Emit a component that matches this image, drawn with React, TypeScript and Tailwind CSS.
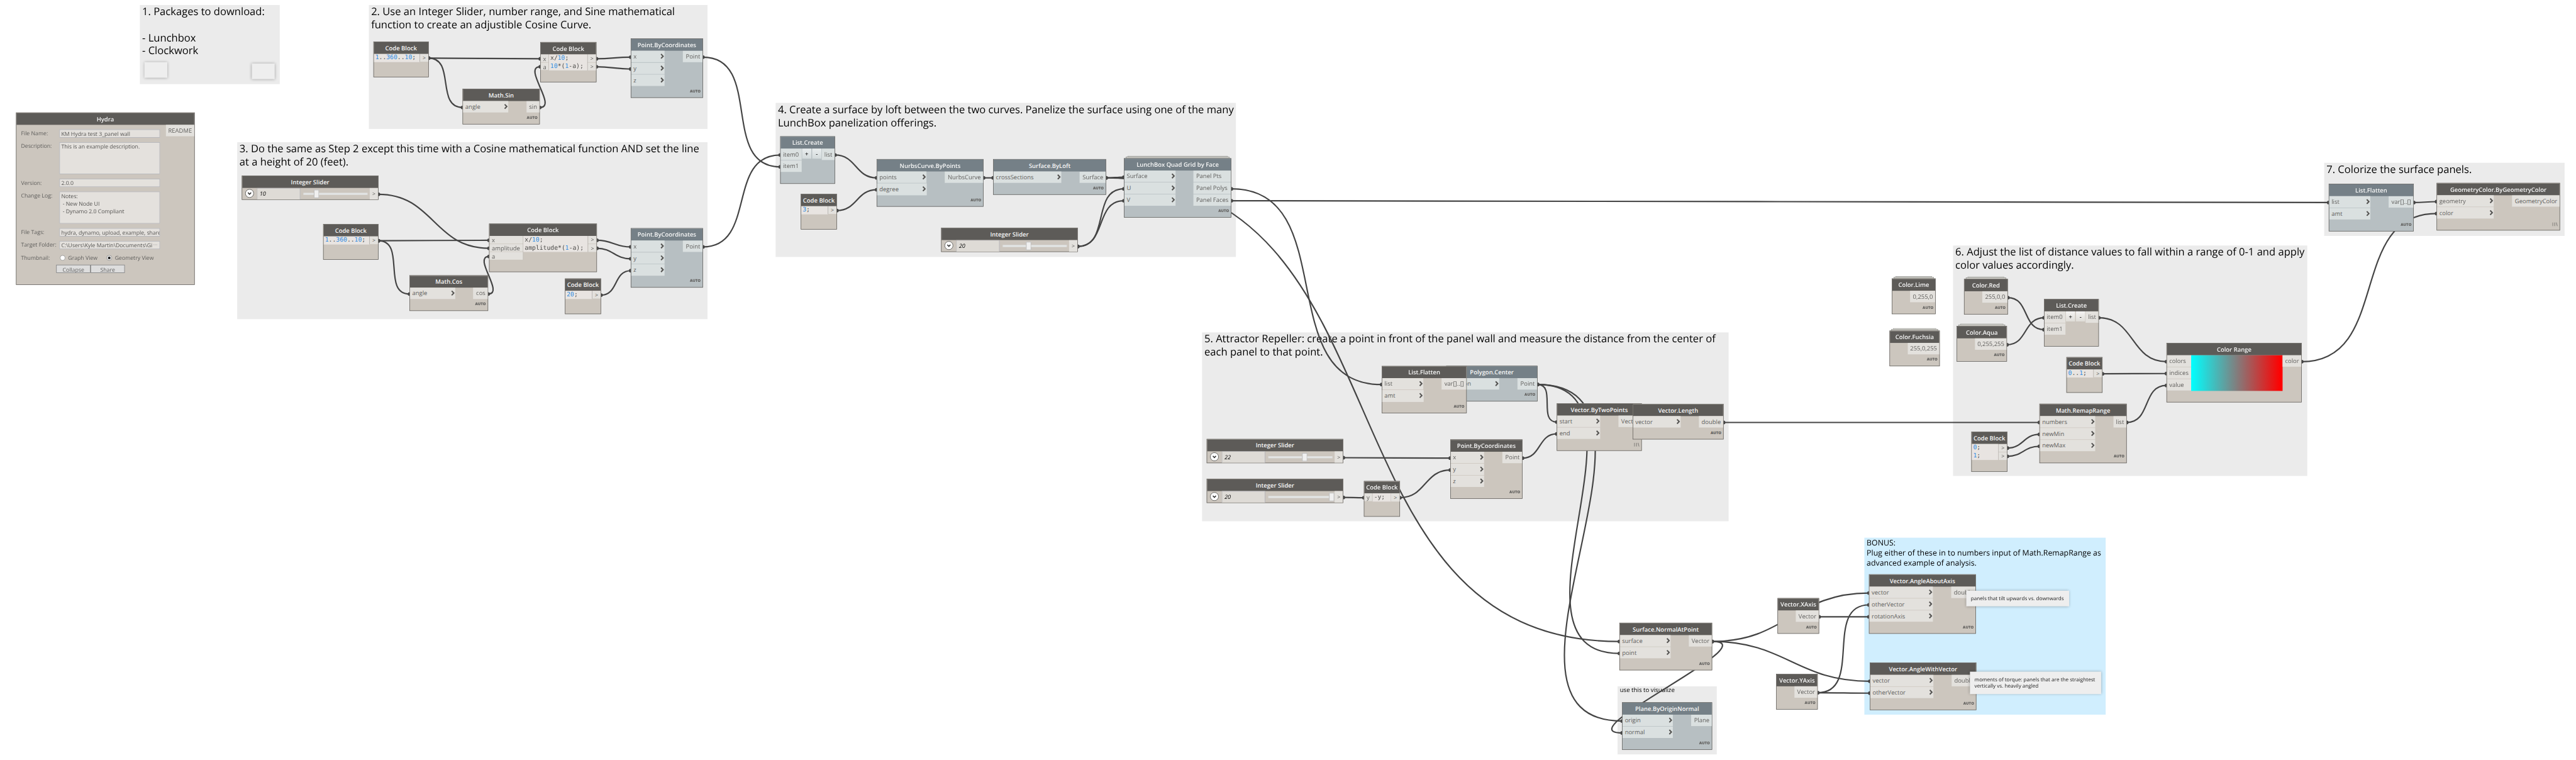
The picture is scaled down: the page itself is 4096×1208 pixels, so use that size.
import React from "react";

type Tone = "dark" | "slate";

/* ---------- shared drawing helpers ---------- */

const tones = {
  dark: { head: "bg-[#5d5b58]", body: "bg-[#ccc6be]", port: "bg-[#e3e1dd]" },
  slate: { head: "bg-[#758087]", body: "bg-[#b7bfc2]", port: "bg-[#dae0e0]" },
};

function Chevron() {
  return (
    <svg width="8" height="12" viewBox="0 0 8 12" className="mb-[2px] shrink-0">
      <path d="M1.2 1.2 L5.8 6 L1.2 10.8" fill="none" stroke="#555452" strokeWidth="2.8" />
    </svg>
  );
}

function Lacing() {
  return (
    <svg width="12" height="9" viewBox="0 0 12 9">
      <path d="M1 0.5V8.5 M5.5 0.5V8.5 M9 0.5L11 8.5" fill="none" stroke="#666462" strokeWidth="1.1" />
    </svg>
  );
}

interface ShellProps {
  x: number;
  y: number;
  w: number;
  h: number;
  title: string;
  tone?: Tone;
  stack?: boolean;
  children?: React.ReactNode;
}

function Shell({ x, y, w, h, title, tone = "dark", stack, children }: ShellProps) {
  const t = tones[tone];
  return (
    <div className="absolute" style={{ left: x, top: y, width: w, height: h }}>
      {stack && (
        <>
          <div className="absolute -top-[5px] left-2 right-2 h-[3px] border border-[#a3a3a0] bg-[#e6e6e2]" />
          <div className="absolute -top-[3px] left-1 right-1 h-1 border border-[#8a8a86] bg-[#dcdbd4]" />
        </>
      )}
      <div className={`relative flex h-full w-full flex-col overflow-hidden border border-[#5a5855] ${t.body}`}>
        <div
          className={`flex h-[26px] shrink-0 items-center justify-center whitespace-nowrap pt-px text-[13px] font-semibold text-[#f6f6f6] ${t.head}`}
        >
          {title}
        </div>
        {children}
      </div>
    </div>
  );
}

interface NodeProps extends Omit<ShellProps, "children"> {
  ins?: string[];
  inW?: number;
  outs: string[];
  outW: number;
  foot?: "auto" | "lacing" | "none";
  plain?: boolean;
  middle?: React.ReactNode;
}

function Node({ ins = [], inW = 0, outs, outW, foot = "auto", plain, middle, ...shell }: NodeProps) {
  const port = tones[shell.tone ?? "dark"].port;
  return (
    <Shell {...shell}>
      <div className="flex flex-1 items-start justify-between">
        <div className="flex flex-col gap-px" style={{ width: inW }}>
          {ins.map((name) => (
            <div key={name} className={`flex h-[25px] items-center justify-between pl-[5px] pr-px text-[13px] text-[#5f5e5c] ${port}`}>
              <span className="pt-px">{name}</span>
              {!plain && <Chevron />}
            </div>
          ))}
        </div>
        {middle}
        <div className="flex flex-col gap-px" style={{ width: outW }}>
          {outs.map((name) => (
            <div
              key={name}
              className={`flex h-[25px] items-center whitespace-nowrap pt-px text-[13px] text-[#5f5e5c] ${port} ${
                outs.length > 1 ? "justify-start pl-[6px]" : "justify-end pr-[5px]"
              }`}
            >
              {name}
            </div>
          ))}
        </div>
      </div>
      {foot !== "none" && (
        <div className="flex h-[25px] shrink-0 items-center justify-end pr-[4px] text-[8.2px] font-extrabold text-[#5f5e5c]">
          {foot === "auto" ? "AUTO" : <Lacing />}
        </div>
      )}
    </Shell>
  );
}

function CreateNode({ x, y, tone }: { x: number; y: number; tone?: Tone }) {
  const btn =
    tone === "slate"
      ? "bg-gradient-to-b from-[#e9edee] to-[#d3dadb]"
      : "bg-gradient-to-b from-[#f4f3f2] to-[#dfddd8]";
  return (
    <Node
      x={x}
      y={y}
      w={120}
      h={104}
      tone={tone}
      title="List.Create"
      ins={["item0", "item1"]}
      inW={46}
      outs={["list"]}
      outW={28}
      plain
      foot="none"
      middle={
        <div className="flex gap-[2px] text-[13px] font-semibold leading-[22px] text-[#222]">
          <div className={`h-[22px] w-[20px] text-center ${btn}`}>+</div>
          <div className={`h-[22px] w-[20px] text-center ${btn}`}>-</div>
        </div>
      }
    />
  );
}

/* Splits a line of code so that number literals can be tinted. */
function CodeLine({ text }: { text: string }) {
  return (
    <div className="h-[17.5px] whitespace-pre leading-[18px]">
      {text.split(/(\d+)/).map((part, i) => (
        <span key={i} className={i % 2 ? "text-[#2f8be2]" : "text-[#4a4947]"}>
          {part}
        </span>
      ))}
    </div>
  );
}

interface CodeProps {
  x: number;
  y: number;
  w?: number;
  h?: number;
  lines: string[];
  ins?: string[];
  inW?: number;
}

function CodeBlock({ x, y, w = 79, h = 78, lines, ins, inW = 18 }: CodeProps) {
  return (
    <Shell x={x} y={y} w={w} h={h} title="Code Block">
      <div className="flex items-start">
        {ins && (
          <div className="flex flex-col gap-px border-r border-[#b5b2ae] text-[13px] text-[#5f5e5c]" style={{ width: inW }}>
            {ins.map((n) => (
              <div key={n} className="h-[16.7px] bg-[#e3e1dd] pl-[5px] leading-[18px]">
                {n}
              </div>
            ))}
          </div>
        )}
        <div className="flex-1 overflow-hidden bg-[#e8e4e1] pl-[3px] font-['DejaVu_Sans_Mono',monospace] text-[13.4px]">
          {lines.map((l) => (
            <CodeLine key={l} text={l} />
          ))}
        </div>
        <div className="flex w-[19px] flex-col gap-px border-l border-[#aaa8a6] text-[12px] text-[#5f5e5c]">
          {lines.map((l) => (
            <div key={l} className="h-[16.8px] bg-[#e3e1dd] text-center leading-[17px]">
              &gt;
            </div>
          ))}
        </div>
      </div>
    </Shell>
  );
}

function Slider({ x, y, value, thumb }: { x: number; y: number; value: number; thumb: number }) {
  return (
    <Shell x={x} y={y} w={299} h={53} title="Integer Slider">
      <div className="flex flex-1">
        <div className="flex w-[32px] items-start justify-center pt-[2px]">
          <svg width="20" height="20" viewBox="0 0 20 20">
            <circle cx="10" cy="10" r="9" fill="#fff" stroke="#5a5855" strokeWidth="1.2" />
            <path d="M6.6 8.2L10 11.8L13.4 8.2" fill="none" stroke="#333" strokeWidth="2.2" />
          </svg>
        </div>
        <div className="w-[95px] border-l border-r border-t border-[#aaaab2] bg-[#dedbd6] pl-[5px] text-[12.5px] italic leading-[24px] text-black">
          {value}
        </div>
        <div className="flex flex-1 items-center pl-[7px]">
          <div className="flex h-[4px] w-[145px] items-center">
            <div className="h-[4px] border border-r-0 border-[#dadada] bg-[#e7eaea]" style={{ width: thumb }} />
            <div className="h-[18px] w-[11px] shrink-0 border border-[#acacac] bg-[#f0f0f0]" />
            <div
              className="h-[4px] border border-l-0 border-[#dadada] bg-[#e7eaea]"
              style={{ width: Math.max(0, 129 - thumb), visibility: thumb >= 129 ? "hidden" : "visible" }}
            />
          </div>
        </div>
        <div className="w-[18px] bg-[#e3e1dd] text-center text-[12px] leading-[26px] text-[#5f5e5c]">&gt;</div>
      </div>
    </Shell>
  );
}

interface GroupProps {
  x: number;
  y: number;
  w: number;
  h: number;
  className: string;
  lines: string[];
  children?: React.ReactNode;
}

function Group({ x, y, w, h, className, lines, children }: GroupProps) {
  return (
    <div className={`absolute whitespace-pre pl-[5px] text-black ${className}`} style={{ left: x, top: y, width: w, height: h }}>
      {lines.map((l, i) => (
        <div key={i}>{l || " "}</div>
      ))}
      {children}
    </div>
  );
}

const big = "bg-[#ebebeb] text-[22.8px] leading-[28.8px]";
const note = "bg-[#eeeeee] shadow-[0_0_6px_rgba(0,0,0,0.3)]";

/* ---------- Hydra upload form ---------- */

function Hydra() {
  const label = "text-[12px] leading-[18px] text-[#5f5e5c]";
  const box = "overflow-hidden whitespace-pre border border-[#abadb3] bg-[#e4e1dd] pl-[3px] text-[12px] text-[#555452]";
  return (
    <Shell x={35} y={246} w={391} h={377} title="Hydra">
      <div className="flex justify-between">
        <div className="grid grid-cols-[84px_220px] gap-y-[10px] whitespace-nowrap pl-[10px] pt-[10px]">
          <div className={label}>File Name:</div>
          <div className={`${box} h-[18px] leading-[17px]`}>KM Hydra test 3_panel wall</div>
          <div className={label}>Description:</div>
          <div className={`${box} h-[70px] leading-[17px]`}>This is an example description.</div>
          <div className={label}>Version:</div>
          <div className={`${box} h-[18px] leading-[17px]`}>2.0.0</div>
          <div className={label}>Change Log:</div>
          <div className={`${box} h-[70px] leading-[17px]`}>{"Notes:\n - New Node UI\n - Dynamo 2.0 Compliant"}</div>
          <div className={label}>File Tags:</div>
          <div className={`${box} h-[18px] leading-[17px] tracking-[-0.08px]`}>hydra, dynamo, upload, example, share</div>
          <div className={label}>Target Folder:</div>
          <div className={`${box} flex h-[18px] leading-[17px]`}>
            <span className="w-[201px] overflow-hidden">C:\Users\Kyle Martin\Documents\Gi</span>
            <span className="leading-[13px] text-[#a5a3a0]">···</span>
          </div>
          <div className={label}>Thumbnail:</div>
          <div className={`${label} flex items-center`}>
            <span className="ml-px mr-[6px] h-[12px] w-[12px] rounded-full border border-[#8a8a8a] bg-white" />
            Graph View
            <span className="ml-[20px] mr-[6px] flex h-[12px] w-[12px] items-center justify-center rounded-full border border-[#777] bg-white">
              <span className="h-[6px] w-[6px] rounded-full bg-[#222]" />
            </span>
            Geometry View
          </div>
        </div>
        <div className="h-[25px] w-[62px] bg-[#e3e1dd] text-center text-[13px] leading-[26px] text-[#5f5e5c]">README</div>
      </div>
      <div className="ml-[87px] mt-[6px] flex text-center text-[12px] leading-[20px] text-[#5f5e5c]">
        <div className="h-[18px] w-[75px] overflow-hidden border border-[#707070] bg-[#dddddd]">Collapse</div>
        <div className="h-[18px] w-[75px] overflow-hidden border border-[#707070] bg-[#dddddd]">Share</div>
      </div>
    </Shell>
  );
}

/* ---------- connectors: [startX, startY, endX, endY] ---------- */

const wires: [number, number, number, number][] = [
  [938, 127, 1182, 128.5],
  [938, 127, 1012, 235],
  [1181, 235, 1182, 146],
  [1305, 128.5, 1380, 125],
  [1305, 146, 1380, 151],
  [1538, 125, 1707, 365],
  [1538, 540, 1707, 339],
  [828, 425, 1070, 543],
  [828, 526.5, 1070, 525.5],
  [828, 526.5, 896, 643],
  [1068, 643, 1070, 561],
  [1306, 525.5, 1380, 540],
  [1306, 543, 1380, 566],
  [1315, 645.5, 1380, 592],
  [1827, 339, 1918, 389],
  [1831, 460.5, 1918, 415],
  [2152, 389, 2173, 389],
  [2420, 389, 2459, 387.5],
  [2420, 389, 3543, 1403],
  [2358, 539, 2459, 413],
  [2358, 539, 2459, 439],
  [2694, 413, 3023, 841],
  [2694, 439, 5095, 443],
  [3364, 841, 3406, 923],
  [3364, 841, 3543, 1429],
  [3364, 841, 3549, 1577],
  [3331, 1002, 3406, 949],
  [2939, 1001, 3173, 1002],
  [2939, 1088, 2984, 1088.5],
  [3063, 1088.5, 3173, 1028],
  [3771, 924, 4462, 924],
  [4393, 651, 4472, 721],
  [4391, 754, 4472, 695],
  [4592, 695, 4740, 791],
  [4600, 817.5, 4740, 817],
  [4653, 924, 4740, 843],
  [4392, 980, 4462, 950],
  [4392, 998, 4462, 976],
  [5036, 791, 5331, 467],
  [5281, 443, 5331, 441],
  [3746, 1403, 4089, 1297],
  [3746, 1403, 4091, 1490],
  [3746, 1403, 3549, 1603],
  [3980, 1349, 4089, 1349],
  [3977, 1515, 4089, 1323],
  [3977, 1515, 4091, 1516],
];

function Wires() {
  return (
    <svg className="absolute left-0 top-0" width="5636" height="1662" viewBox="0 0 5636 1662">
      {wires.map(([a, b, c, d], i) => {
        const off = 0.45 * Math.hypot(c - a, d - b);
        return (
          <g key={i}>
            <path d={`M${a} ${b}C${a + off} ${b} ${c - off} ${d} ${c} ${d}`} fill="none" stroke="#444444" strokeWidth="3" />
            <circle cx={a} cy={b} r="4" fill="#444444" />
            <circle cx={c} cy={d} r="4" fill="#444444" />
          </g>
        );
      })}
    </svg>
  );
}

export default function App() {
  return (
    <div className="h-[1208px] w-[4096px] overflow-hidden bg-white">
      <div className="relative h-[1662px] w-[5636px] origin-top-left scale-[0.72676] font-['Open_Sans',sans-serif] [text-rendering:geometricPrecision]">
        <Group x={306} y={11} w={306} h={173} className={big} lines={["1. Packages to download:", "", "- Lunchbox", "- Clockwork"]}>
          <div className="flex items-end justify-between pl-[5px] pr-[11px] pt-[10px]">
            <div className={`${note} mb-[3px] h-[34px] w-[50px]`} />
            <div className={`${note} h-[34px] w-[50px]`} />
          </div>
        </Group>
        <Group
          x={807}
          y={11}
          w={741}
          h={271}
          className={big}
          lines={["2. Use an Integer Slider, number range, and Sine mathematical", "function to create an adjustible Cosine Curve."]}
        />
        <Group
          x={519}
          y={311}
          w={1029}
          h={387}
          className={big}
          lines={[
            "3. Do the same as Step 2 except this time with a Cosine mathematical function AND set the line",
            "at a height of 20 (feet).",
          ]}
        />
        <Group
          x={1697}
          y={225}
          w={1007}
          h={337}
          className={big}
          lines={[
            "4. Create a surface by loft between the two curves. Panelize the surface using one of the many",
            "LunchBox panelization offerings.",
          ]}
        />
        <Group
          x={2630}
          y={727}
          w={1152}
          h={413}
          className={big}
          lines={[
            "5. Attractor Repeller: create a point in front of the panel wall and measure the distance from the center of",
            "each panel to that point.",
          ]}
        />
        <Group
          x={4273}
          y={537}
          w={775}
          h={504}
          className={big}
          lines={["6. Adjust the list of distance values to fall within a range of 0-1 and apply", "color values accordingly."]}
        />
        <Group x={5085} y={356} w={526} h={160} className={big} lines={["7. Colorize the surface panels."]} />
        <Group
          x={4079}
          y={1176}
          w={528}
          h={387}
          className="bg-[#d0eefe] text-[17px] leading-[22px]"
          lines={["BONUS:", "Plug either of these in to numbers input of Math.RemapRange as", "advanced example of analysis."]}
        />
        <Group x={3539} y={1501} w={217} h={149} className="bg-[#ebebeb] text-[13.3px] leading-[17px]" lines={["use this to visualize"]} />

        <Wires />

        <Hydra />

        <CodeBlock x={817} y={91} w={121} lines={["1..360..10;"]} />
        <CodeBlock x={1182} y={92} w={123} h={88} ins={["x", "a"]} lines={["x/10;", "10*(1-a);"]} />
        <Node x={1012} y={194} w={169} h={78} title="Math.Sin" ins={["angle"]} inW={99} outs={["sin"]} outW={28} />
        <Node x={1380} y={84} w={158} h={130} tone="slate" title="Point.ByCoordinates" ins={["x", "y", "z"]} inW={73} outs={["Point"]} outW={43} />

        <Slider x={529} y={384} value={10} thumb={23} />
        <CodeBlock x={707} y={490} w={121} lines={["1..360..10;"]} />
        <CodeBlock x={1070} y={489} w={236} h={106} ins={["x", "amplitude", "a"]} inW={74} lines={["x/10;", "amplitude*(1-a);"]} />
        <Node x={896} y={602} w={172} h={78} title="Math.Cos" ins={["angle"]} inW={99} outs={["cos"]} outW={32} />
        <CodeBlock x={1236} y={609} lines={["20;"]} />
        <Node x={1380} y={499} w={158} h={130} tone="slate" title="Point.ByCoordinates" ins={["x", "y", "z"]} inW={73} outs={["Point"]} outW={43} />

        <CreateNode x={1707} y={298} tone="slate" />
        <CodeBlock x={1752} y={424} lines={["3;"]} />
        <Node x={1918} y={348} w={234} h={104} tone="slate" title="NurbsCurve.ByPoints" ins={["points", "degree"]} inW={108} outs={["NurbsCurve"]} outW={84} />
        <Node x={2173} y={348} w={247} h={78} tone="slate" title="Surface.ByLoft" ins={["crossSections"]} inW={148} outs={["Surface"]} outW={57} />
        <Node
          x={2459}
          y={346}
          w={235}
          h={130}
          tone="slate"
          stack
          title="LunchBox Quad Grid by Face"
          ins={["Surface", "U", "V"]}
          inW={112}
          outs={["Panel Pts", "Panel Polys", "Panel Faces"]}
          outW={82}
        />
        <Slider x={2059} y={498} value={20} thumb={51} />

        <Node x={3164} y={800} w={200} h={78} tone="slate" title="Polygon.Center" ins={["polygon"]} inW={115} outs={["Point"]} outW={43} />
        <Node x={3023} y={800} w={186} h={104} title="List.Flatten" ins={["list", "amt"]} inW={90} outs={["var[]..[]"]} outW={54} />
        <Node x={3406} y={882} w={186} h={104} title="Vector.ByTwoPoints" ins={["start", "end"]} inW={94} outs={["Vector"]} outW={50} foot="lacing" />
        <Node x={3572} y={883} w={199} h={78} title="Vector.Length" ins={["vector"]} inW={104} outs={["double"]} outW={53} />
        <Slider x={2640} y={960} value={22} thumb={74} />
        <Slider x={2640} y={1047} value={20} thumb={134} />
        <CodeBlock x={2984} y={1052} ins={["y"]} lines={["-y;"]} />
        <Node x={3173} y={961} w={158} h={130} title="Point.ByCoordinates" ins={["x", "y", "z"]} inW={73} outs={["Point"]} outW={43} />

        <Node x={4139} y={609} w={96} h={78} stack title="Color.Lime" outs={["0,255,0"]} outW={55} />
        <Node x={4134} y={723} w={110} h={78} stack title="Color.Fuchsia" outs={["255,0,255"]} outW={69} />
        <Node x={4297} y={610} w={96} h={78} stack title="Color.Red" outs={["255,0,0"]} outW={55} />
        <Node x={4281} y={713} w={110} h={78} stack title="Color.Aqua" outs={["0,255,255"]} outW={69} />
        <CreateNode x={4472} y={654} />
        <CodeBlock x={4521} y={781} lines={["0..1;"]} />
        <CodeBlock x={4313} y={944} h={88} lines={["0;", "1;"]} />
        <Node x={4462} y={883} w={191} h={130} title="Math.RemapRange" ins={["numbers", "newMin", "newMax"]} inW={121} outs={["list"]} outW={28} />
        <Node
          x={4740}
          y={750}
          w={296}
          h={130}
          title="Color Range"
          ins={["colors", "indices", "value"]}
          inW={53}
          outs={["color"]}
          outW={41}
          plain
          foot="none"
          middle={<div className="h-[78px] w-[200px] bg-[linear-gradient(to_right,#00ffff,#ff0000_98%)]" />}
        />

        <Node x={5095} y={402} w={186} h={104} tone="slate" title="List.Flatten" ins={["list", "amt"]} inW={90} outs={["var[]..[]"]} outW={54} />
        <Node
          x={5331}
          y={400}
          w={270}
          h={104}
          title="GeometryColor.ByGeometryColor"
          ins={["geometry", "color"]}
          inW={124}
          outs={["GeometryColor"]}
          outW={104}
          foot="lacing"
        />

        <Node x={3889} y={1308} w={91} h={78} title="Vector.XAxis" outs={["Vector"]} outW={50} />
        <Node x={3886} y={1474} w={91} h={78} title="Vector.YAxis" outs={["Vector"]} outW={50} />
        <Node
          x={4089}
          y={1256}
          w={234}
          h={130}
          title="Vector.AngleAboutAxis"
          ins={["vector", "otherVector", "rotationAxis"]}
          inW={139}
          outs={["double"]}
          outW={53}
        />
        <Node x={4091} y={1449} w={233} h={104} title="Vector.AngleWithVector" ins={["vector", "otherVector"]} inW={138} outs={["double"]} outW={53} />
        <Node x={3543} y={1362} w={203} h={104} title="Surface.NormalAtPoint" ins={["surface", "point"]} inW={111} outs={["Vector"]} outW={50} />
        <Node x={3549} y={1536} w={197} h={104} tone="slate" title="Plane.ByOriginNormal" ins={["origin", "normal"]} inW={110} outs={["Plane"]} outW={45} />

        <div
          className={`${note} absolute left-[4302px] top-[1292px] flex h-[34px] w-[225px] items-center whitespace-nowrap pl-[10px] text-[11.2px] text-[#222]`}
        >
          panels that tilt upwards vs. downwards
        </div>
        <div
          className={`${note} absolute left-[4310px] top-[1469px] flex h-[49px] w-[287px] items-center whitespace-pre pl-[10px] text-[11.2px] leading-[14px] text-[#222]`}
        >
          {"moments of torque: panels that are the straightest\nvertically vs. heavily angled"}
        </div>
      </div>
    </div>
  );
}
